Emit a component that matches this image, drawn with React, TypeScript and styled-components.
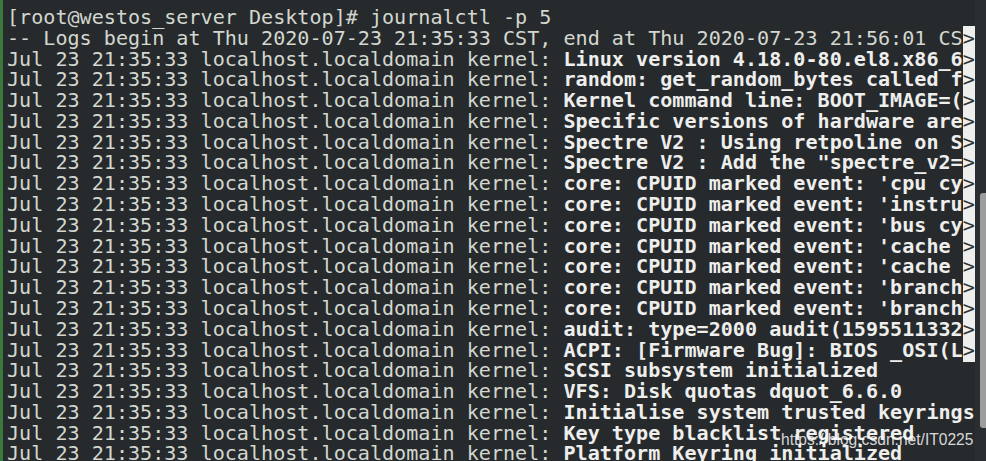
import React from "react";
import styled, { createGlobalStyle } from "styled-components";

const Global = createGlobalStyle`
  html, body { margin: 0; padding: 0; background: #262a2d; overflow: hidden; }
  #root { width: 986px; height: 461px; }
`;

const Screen = styled.div`
  position: relative;
  display: flex;
  width: 986px;
  height: 461px;
  overflow: hidden;
  background: #262a2d;
`;

const Edge = styled.div`
  width: 3px;
  flex: none;
  background: #3b783b;
`;

const Terminal = styled.div`
  flex: none;
  width: 968px;
  padding: 7px 0 0 4px;
  font-family: "DejaVu Sans Mono", monospace;
  font-size: 20.1px;
  line-height: 20.79px;
  color: #d3d7cf;
  white-space: pre;
`;

const Line = styled.div`
  height: 20.79px;
`;

const Msg = styled.span`
  font-weight: bold;
  color: #eeeeec;
`;

const More = styled.span`
  background: #eeeeec;
  color: #2e3436;
`;

const Scroll = styled.div`
  flex: 1;
  display: flex;
  flex-direction: column;
  align-items: flex-end;
  padding-top: 193px;
  background: #2a2e31;
`;

const Thumb = styled.div`
  width: 6px;
  height: 235px;
  background: #9d9d9d;
  border-radius: 3px 0 0 3px;
`;

const Watermark = styled.div`
  position: absolute;
  left: 781px;
  top: 431px;
  font-family: "Liberation Sans", Arial, sans-serif;
  font-size: 15.6px;
  color: rgba(255, 255, 255, 0.82);
  white-space: nowrap;
`;

const prefix = "Jul 23 21:35:33 localhost.localdomain kernel: ";

const logs: { msg: string; more?: boolean }[] = [
  { msg: "Linux version 4.18.0-80.el8.x86_6", more: true },
  { msg: "random: get_random_bytes called f", more: true },
  { msg: "Kernel command line: BOOT_IMAGE=(", more: true },
  { msg: "Specific versions of hardware are", more: true },
  { msg: "Spectre V2 : Using retpoline on S", more: true },
  { msg: 'Spectre V2 : Add the "spectre_v2=', more: true },
  { msg: "core: CPUID marked event: 'cpu cy", more: true },
  { msg: "core: CPUID marked event: 'instru", more: true },
  { msg: "core: CPUID marked event: 'bus cy", more: true },
  { msg: "core: CPUID marked event: 'cache ", more: true },
  { msg: "core: CPUID marked event: 'cache ", more: true },
  { msg: "core: CPUID marked event: 'branch", more: true },
  { msg: "core: CPUID marked event: 'branch", more: true },
  { msg: "audit: type=2000 audit(1595511332", more: true },
  { msg: "ACPI: [Firmware Bug]: BIOS _OSI(L", more: true },
  { msg: "SCSI subsystem initialized" },
  { msg: "VFS: Disk quotas dquot_6.6.0" },
  { msg: "Initialise system trusted keyrings" },
  { msg: "Key type blacklist registered" },
  { msg: "Platform Keyring initialized" },
];

export default function App() {
  return (
    <Screen>
      <Global />
      <Edge />
      <Terminal>
        <Line>[root@westos_server Desktop]# journalctl -p 5</Line>
        <Line>
          -- Logs begin at Thu 2020-07-23 21:35:33 CST, end at Thu 2020-07-23 21:56:01 CS
          <More>&gt;</More>
        </Line>
        {logs.map((l, i) => (
          <Line key={i}>
            {prefix}
            <Msg>{l.msg}</Msg>
            {l.more && <More>&gt;</More>}
          </Line>
        ))}
      </Terminal>
      <Scroll>
        <Thumb />
      </Scroll>
      <Watermark>https://blog.csdn.net/IT0225</Watermark>
    </Screen>
  );
}
